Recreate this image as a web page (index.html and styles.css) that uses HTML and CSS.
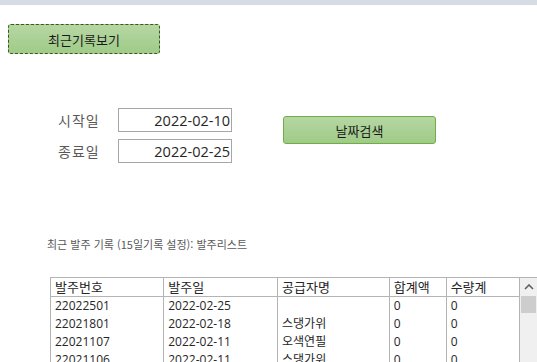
FILE: index.html
```html
<!DOCTYPE html>
<html lang="ko">
<head>
    <meta charset="UTF-8">
    <meta name="viewport" content="width=device-width, initial-scale=1.0">
    <title>발주리스트</title>
    <link rel="stylesheet" href="styles.css">
</head>
<body>
    <div class="topbar"></div>

    <button class="btn btn-recent">최근기록보기</button>

    <!-- 날짜 검색 -->
    <div class="search">
        <div class="fields">
            <div class="field">
                <label for="start-date">시작일</label>
                <input type="text" id="start-date" value="2022-02-10">
            </div>
            <div class="field">
                <label for="end-date">종료일</label>
                <input type="text" id="end-date" value="2022-02-25">
            </div>
        </div>
        <button class="btn btn-search">날짜검색</button>
    </div>

    <p class="caption">최근 발주 기록 (15일기록 설정): 발주리스트</p>

    <div class="list">
        <table class="list-table">
            <thead>
                <tr>
                    <th class="col-no">발주번호</th>
                    <th class="col-date">발주일</th>
                    <th class="col-vendor">공급자명</th>
                    <th class="col-sum">합계액</th>
                    <th class="col-qty">수량계</th>
                </tr>
            </thead>
            <tbody>
                <tr><td>22022501</td><td>2022-02-25</td><td></td><td>0</td><td>0</td></tr>
                <tr><td>22021801</td><td>2022-02-18</td><td>스댕가위</td><td>0</td><td>0</td></tr>
                <tr><td>22021107</td><td>2022-02-11</td><td>오색연필</td><td>0</td><td>0</td></tr>
                <tr><td>22021106</td><td>2022-02-11</td><td>스댕가위</td><td>0</td><td>0</td></tr>
            </tbody>
        </table>
        <div class="scrollbar">
            <div class="scroll-up">
                <svg width="10" height="6" viewBox="0 0 10 6"><path d="M1 5 L5 1 L9 5" fill="none" stroke="#606060" stroke-width="1.6"/></svg>
            </div>
            <div class="scroll-thumb"></div>
        </div>
    </div>
</body>
</html>
```

FILE: styles.css
```css
* {
    margin: 0;
    padding: 0;
    box-sizing: border-box;
}

body {
    font-family: "Open Sans", "Noto Sans CJK KR", sans-serif;
    background-color: #fff;
    color: #262626;
    height: 100vh;
    overflow: hidden;
}

.topbar {
    height: 5px;
    background-color: #d6dce4;
}

.btn {
    display: block;
    font-family: "Noto Sans CJK KR", sans-serif;
    font-size: 13px;
    color: #1a1a1a;
    background: linear-gradient(#b6d7a3, #9fcb88);
    border-radius: 3px;
    cursor: pointer;
}

.btn-recent {
    width: 152px;
    height: 30px;
    margin: 19px 0 0 8px;
    border: 1px dashed #385723;
}

.search {
    display: flex;
    margin-top: 54px;
}

.fields {
    display: flex;
    flex-direction: column;
    gap: 7px;
    padding-left: 58px;
}

.field {
    display: flex;
    align-items: center;
}

.field label {
    width: 60px;
    font-family: "Noto Sans CJK KR", sans-serif;
    font-size: 14px;
    letter-spacing: 1px;
    color: #595959;
}

.field input {
    width: 114px;
    height: 24px;
    border: 1px solid #a6a6a6;
    padding-right: 1px;
    text-align: right;
    font-family: "Open Sans", sans-serif;
    font-size: 14.5px;
    color: #262626;
}

.btn-search {
    width: 153px;
    height: 28px;
    margin: 8px 0 0 51px;
    border: 1px solid #70ad47;
}

.caption {
    margin: 74px 0 0 47px;
    font-family: "Noto Sans CJK KR", sans-serif;
    font-size: 11px;
    line-height: 14px;
    color: #595959;
}

.list {
    display: flex;
    margin: 26px 0 0 50px;
    border: 1px solid #b4b4b4;
    border-right: none;
}

.list-table {
    border-collapse: collapse;
    font-size: 12px;
    color: #262626;
}

.list-table th,
.list-table td {
    height: 18px;
    padding: 0 4px;
    text-align: left;
    font-weight: normal;
    white-space: nowrap;
    border-left: 1px solid #b4b4b4;
    line-height: 17px;
}

.list-table th:first-child,
.list-table td:first-child {
    border-left: none;
}

.list-table th {
    font-family: "Noto Sans CJK KR", sans-serif;
    font-size: 13px;
    border-bottom: 1px solid #b4b4b4;
}

.list-table td {
    font-family: "Open Sans", "Noto Sans CJK KR", sans-serif;
}

.col-no { width: 113px; }
.col-date { width: 114px; }
.col-vendor { width: 112px; }
.col-sum { width: 57px; }
.col-qty { width: 73px; }

.scrollbar {
    width: 18px;
    background-color: #f0f0f0;
    border-left: 1px solid #b4b4b4;
}

.scroll-up {
    height: 18px;
    display: flex;
    align-items: center;
    justify-content: center;
}

.scroll-thumb {
    height: 17px;
    margin: 0 1px;
    background-color: #cdcdcd;
}
```
